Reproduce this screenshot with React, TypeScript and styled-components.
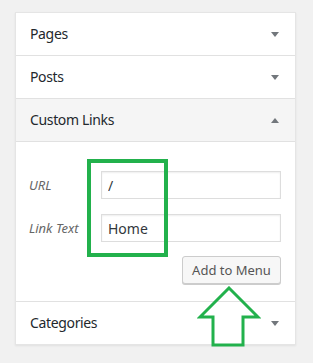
import * as React from 'react'
import styled, {createGlobalStyle} from 'styled-components'

const GlobalStyle = createGlobalStyle`
  html, body {
    margin: 0;
    padding: 0;
    background: #f1f1f1;
  }
  body {
    font-family: "Noto Sans", "Open Sans", sans-serif;
    color: #23282d;
  }
`

const Page = styled.div`
  padding: 12px 17px 18px 15px;
`

const Panel = styled.div`
  position: relative;
  width: 279px;
  border: 1px solid #e5e5e5;
  background: #fff;
  box-shadow: 0 1px 2px rgba(0, 0, 0, 0.07);
`

type SectionProps = {open?: boolean; last?: boolean}

const Header = styled.div<{$open?: boolean; $last?: boolean}>`
  display: flex;
  align-items: center;
  justify-content: space-between;
  height: 42px;
  padding: 0 16px 0 14px;
  background: ${({$open}) => ($open ? '#f5f5f5' : '#fff')};
  border-bottom: ${({$last}) => ($last ? 'none' : '1px solid #e1e1e1')};
  font-size: 14px;
  letter-spacing: -0.35px;
  color: #23282d;
`

const Title = styled.span`
  line-height: 1;
`

const Caret = styled.span<{$up?: boolean}>`
  width: 0;
  height: 0;
  border-left: 4px solid transparent;
  border-right: 4px solid transparent;
  ${({$up}) =>
    $up ? 'border-bottom: 5px solid #72777c;' : 'border-top: 5px solid #72777c;'}
`

const Body = styled.div`
  padding: 29px 14px 17px 13px;
  border-bottom: 1px solid #e1e1e1;
`

const Field = styled.div`
  display: grid;
  grid-template-columns: 72px 180px;
  align-items: center;
  margin-bottom: 15px;
`

const Label = styled.label`
  font-style: italic;
  font-size: 13px;
  color: #666;
`

const Input = styled.input`
  box-sizing: border-box;
  width: 180px;
  height: 28px;
  padding: 0 6px;
  border: 1px solid #ddd;
  box-shadow: inset 0 1px 2px rgba(0, 0, 0, 0.07);
  font-family: inherit;
  font-size: 14px;
  color: #32373c;
  background: #fff;
  outline: none;
`

const Actions = styled.div`
  display: flex;
  justify-content: flex-end;
  margin-top: -1px;
  padding-right: 0;
`

const Button = styled.button`
  box-sizing: border-box;
  width: 99px;
  height: 28px;
  padding: 0;
  border: 1px solid #ccc;
  border-radius: 3px;
  background: #f7f7f7;
  box-shadow: 0 1px 0 #ccc;
  font-family: inherit;
  font-size: 13px;
  color: #555;
`

const Highlight = styled.div`
  position: absolute;
  left: 71px;
  top: 146px;
  width: 81px;
  height: 98px;
  box-sizing: border-box;
  border: 4px solid #22b14c;
  pointer-events: none;
`

const ArrowMark = styled.svg`
  position: absolute;
  left: 181px;
  top: 273px;
  pointer-events: none;
`

const Section: React.FC<SectionProps & {title: string}> = ({title, open, last}) => (
  <Header $open={open} $last={last && !open}>
    <Title>{title}</Title>
    <Caret $up={open} />
  </Header>
)

export default function App() {
  return (
    <Page>
      <GlobalStyle />
      <Panel>
        <Section title="Pages" />
        <Section title="Posts" />
        <Section title="Custom Links" open />
        <Body>
          <Field>
            <Label>URL</Label>
            <Input defaultValue="/" />
          </Field>
          <Field>
            <Label>Link Text</Label>
            <Input defaultValue="Home" />
          </Field>
          <Actions>
            <Button>Add to Menu</Button>
          </Actions>
        </Body>
        <Section title="Categories" last />
        <Highlight />
        <ArrowMark width="64" height="64" viewBox="0 0 64 64">
          <polygon
            points="32,2 61,31 46,31 46,59 16,59 16,31 3,31"
            fill="none"
            stroke="#22b14c"
            strokeWidth="3"
            strokeLinejoin="miter"
          />
        </ArrowMark>
      </Panel>
    </Page>
  )
}
